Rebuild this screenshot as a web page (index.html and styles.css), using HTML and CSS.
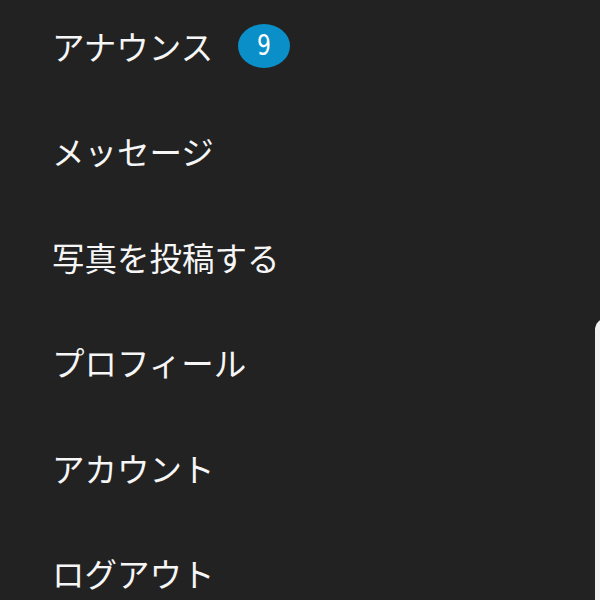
FILE: index.html
```
<!DOCTYPE html>
<html lang="ja">
<head>
<meta charset="utf-8">
<link rel="stylesheet" href="styles.css">
</head>
<body>
<div class="screen">
  <ul class="menu">
    <li class="item">アナウンス<span class="badge"><span class="badge-num">9</span></span></li>
    <li class="item">メッセージ</li>
    <li class="item">写真を投稿する</li>
    <li class="item">プロフィール</li>
    <li class="item">アカウント</li>
    <li class="item">ログアウト</li>
  </ul>
  <div class="panel"></div>
</div>
</body>
</html>
```
FILE: styles.css
```
html, body {
  margin: 0;
  padding: 0;
  background: #222222;
}
.screen {
  width: 600px;
  height: 600px;
  position: relative;
  overflow: hidden;
  background: #222222;
}
.menu {
  list-style: none;
  margin: 0;
  padding: 25px 0 0 52px;
  display: flex;
  flex-direction: column;
  gap: 63.4px;
}
.item {
  font-family: "Noto Sans CJK JP", sans-serif;
  font-size: 32.5px;
  line-height: 42px;
  height: 42px;
  color: #f6f6f6;
  display: flex;
  align-items: center;
  white-space: nowrap;
}
.badge {
  margin-left: 25px;
  width: 52px;
  height: 44px;
  border-radius: 50%;
  background: #0a8fc8;
  display: flex;
  align-items: center;
  justify-content: center;
}
.badge-num {
  color: #ffffff;
  font-family: "DejaVu Sans", sans-serif;
  font-size: 28px;
  line-height: 44px;
  display: inline-block;
  transform: scaleX(0.78);
}
.panel {
  position: absolute;
  left: 595px;
  top: 318px;
  width: 20px;
  height: 300px;
  background: #f2f2f2;
  border-top-left-radius: 12px;
}
```
